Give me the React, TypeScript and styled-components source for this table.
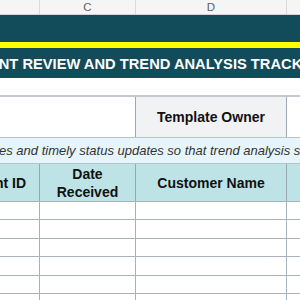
import React from "react";
import styled, { createGlobalStyle } from "styled-components";

const GlobalStyle = createGlobalStyle`
  html, body {
    margin: 0;
    padding: 0;
    background: #ffffff;
    overflow: hidden;
  }
  body {
    font-family: "Liberation Sans", Arial, sans-serif;
  }
`;

const COLS = "40px 96px 151px 1fr";

const Sheet = styled.div`
  width: 300px;
  height: 300px;
  overflow: hidden;
  display: flex;
  flex-direction: column;
  & > * {
    flex: none;
  }
`;

const ColumnBar = styled.div`
  display: grid;
  grid-template-columns: ${COLS};
  height: 14px;
  background: #f5f5f5;
  border-bottom: 1px solid #d4d4d4;
`;

const ColumnLetter = styled.div`
  border-right: 1px solid #dadada;
  font-size: 11.5px;
  line-height: 14px;
  color: #606060;
  text-align: center;
  &:last-child {
    border-right: none;
  }
`;

const Band = styled.div`
  background: #124b5a;
  height: 26px;
`;

const Stripe = styled.div`
  background: #ffff00;
  height: 6px;
  border-top: 1px solid #124b5a;
  border-bottom: 1px solid #124b5a;
`;

const TitleBand = styled.div`
  background: #124b5a;
  height: 29px;
  display: flex;
  align-items: center;
  overflow: hidden;
  white-space: nowrap;
`;

const Title = styled.span`
  color: #ffffff;
  font-weight: 700;
  font-size: 14.7px;
  text-indent: -69px;
  display: block;
`;

const Spacer = styled.div`
  height: 17px;
  border-bottom: 2px solid #c4c9d0;
`;

const Row = styled.div<{ $h: number; $bg?: string; $line?: string }>`
  display: grid;
  grid-template-columns: ${COLS};
  height: ${(p) => p.$h}px;
  background: ${(p) => p.$bg || "#ffffff"};
  border-bottom: 1px solid ${(p) => p.$line || "#a9b1bb"};
`;

const Cell = styled.div<{ $bg?: string; $line?: string; $end?: boolean }>`
  background: ${(p) => p.$bg || "transparent"};
  border-right: 1px solid ${(p) => p.$line || "#a9b1bb"};
  display: flex;
  align-items: center;
  justify-content: ${(p) => (p.$end ? "flex-end" : "center")};
  overflow: hidden;
  white-space: nowrap;
  &:last-child {
    border-right: none;
  }
`;

const OwnerLabel = styled.span`
  font-weight: 700;
  font-size: 14px;
  color: #111;
`;

const Note = styled.div`
  height: 25px;
  background: #e6f5fb;
  border-bottom: 1px solid #b4c3cc;
  display: flex;
  align-items: center;
  overflow: hidden;
  white-space: nowrap;
`;

const NoteText = styled.span`
  font-style: italic;
  font-size: 13px;
  color: #333;
  margin-left: -1px;
`;

const HeadText = styled.span<{ $pad?: number }>`
  font-weight: 700;
  font-size: 14px;
  line-height: 18px;
  color: #111;
  text-align: center;
  white-space: pre;
  padding-right: ${(p) => p.$pad || 0}px;
`;

export default function App() {
  const rows = [0, 1, 2, 3, 4, 5];
  return (
    <>
      <GlobalStyle />
      <Sheet>
        <ColumnBar>
          <ColumnLetter />
          <ColumnLetter>C</ColumnLetter>
          <ColumnLetter>D</ColumnLetter>
          <ColumnLetter />
        </ColumnBar>
        <Band />
        <Stripe />
        <TitleBand>
          <Title>COMPLAINT REVIEW AND TREND ANALYSIS TRACKER</Title>
        </TitleBand>
        <Spacer />
        <Row $h={40} $line="#b4c3cc">
          <Cell $line="transparent" />
          <Cell $line="#a0a8b2" />
          <Cell $bg="#f1f2f4" $line="#a0a8b2">
            <OwnerLabel>Template Owner</OwnerLabel>
          </Cell>
          <Cell />
        </Row>
        <Note>
          <NoteText>
            es and timely status updates so that trend analysis stays accurate.
          </NoteText>
        </Note>
        <Row $h={37} $bg="#bde3e6" $line="#a9b1bb">
          <Cell $end $line="#9aa6b0">
            <HeadText $pad={13}>Complaint ID</HeadText>
          </Cell>
          <Cell $line="#9aa6b0">
            <HeadText>{"Date\nReceived"}</HeadText>
          </Cell>
          <Cell $line="#9aa6b0">
            <HeadText>Customer Name</HeadText>
          </Cell>
          <Cell />
        </Row>
        {rows.map((r) => (
          <Row key={r} $h={17.4}>
            <Cell />
            <Cell />
            <Cell />
            <Cell />
          </Row>
        ))}
      </Sheet>
    </>
  );
}
